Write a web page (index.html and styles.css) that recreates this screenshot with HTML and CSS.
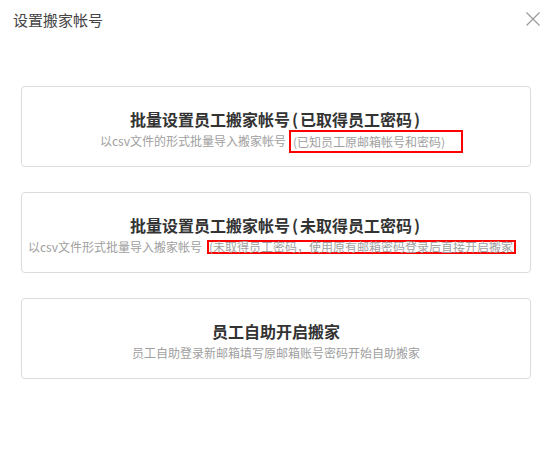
FILE: index.html
```html
<!DOCTYPE html>
<html lang="zh-CN">
<head>
<meta charset="utf-8">
<title>设置搬家帐号</title>
<link rel="stylesheet" href="styles.css">
</head>
<body>
<div class="dialog">
  <div class="header">
    <div class="title">设置搬家帐号</div>
    <div class="close" aria-label="关闭">
      <svg width="14" height="14" viewBox="0 0 14 14"><path d="M0.5 0.5L13.5 13.5M13.5 0.5L0.5 13.5" stroke="#9a9a9a" stroke-width="1.2" fill="none"/></svg>
    </div>
  </div>
  <div class="list">
    <div class="card">
      <div class="card-title">批量设置员工搬家帐号<span class="paren">(</span>已取得员工密码<span class="paren">)</span></div>
      <div class="card-sub sub-a">以csv文件的形式批量导入搬家帐号<span class="mark mark-a">(已知员工原邮箱帐号和密码)</span></div>
    </div>
    <div class="card">
      <div class="card-title">批量设置员工搬家帐号<span class="paren">(</span>未取得员工密码<span class="paren">)</span></div>
      <div class="card-sub sub-b">以csv文件形式批量导入搬家帐号<span class="mark mark-b">(未取得员工密码，使用原有邮箱密码登录后直接开启搬家</span></div>
    </div>
    <div class="card">
      <div class="card-title">员工自助开启搬家</div>
      <div class="card-sub">员工自助登录新邮箱填写原邮箱账号密码开始自助搬家</div>
    </div>
  </div>
</div>
</body>
</html>
```

FILE: styles.css
```css
* { box-sizing: border-box; }
html, body {
  margin: 0;
  padding: 0;
  background: #fff;
}
body {
  font-family: "Noto Sans CJK SC", "Noto Sans", sans-serif;
  color: #333;
}
.dialog {
  width: 550px;
  height: 451px;
}
.header {
  display: flex;
  justify-content: space-between;
  align-items: flex-start;
  padding: 11px 10px 0 13px;
}
.title {
  font-size: 15px;
  line-height: 18px;
  color: #444;
}
.close {
  width: 14px;
  height: 14px;
  margin-top: 1px;
  display: flex;
}
.list {
  display: flex;
  flex-direction: column;
  gap: 25px;
  margin: 57px 19px 0 21px;
}
.card {
  height: 81px;
  border: 1px solid #dcdcdc;
  border-radius: 4px;
  padding-top: 19px;
  display: flex;
  flex-direction: column;
  align-items: center;
}
.card-title {
  font-size: 16px;
  line-height: 26px;
  font-weight: bold;
  color: #333;
  white-space: nowrap;
}
.paren {
  margin: 0 2px;
}
.card-sub {
  display: flex;
  align-items: center;
  justify-content: center;
  height: 18px;
  font-size: 12px;
  line-height: 18px;
  color: #a0a0a0;
  white-space: nowrap;
}
.sub-a { padding-left: 11px; }
.sub-b { padding-right: 8px; }
.mark {
  display: inline-block;
  border: 2px solid #f00;
  color: #a0a0a0;
}
.mark-a {
  margin-left: 3px;
  line-height: 19px;
  padding: 0 16px 0 2px;
}
.mark-b {
  margin-left: 5px;
  line-height: 10px;
  padding: 0 1px 0 0;
}
```
